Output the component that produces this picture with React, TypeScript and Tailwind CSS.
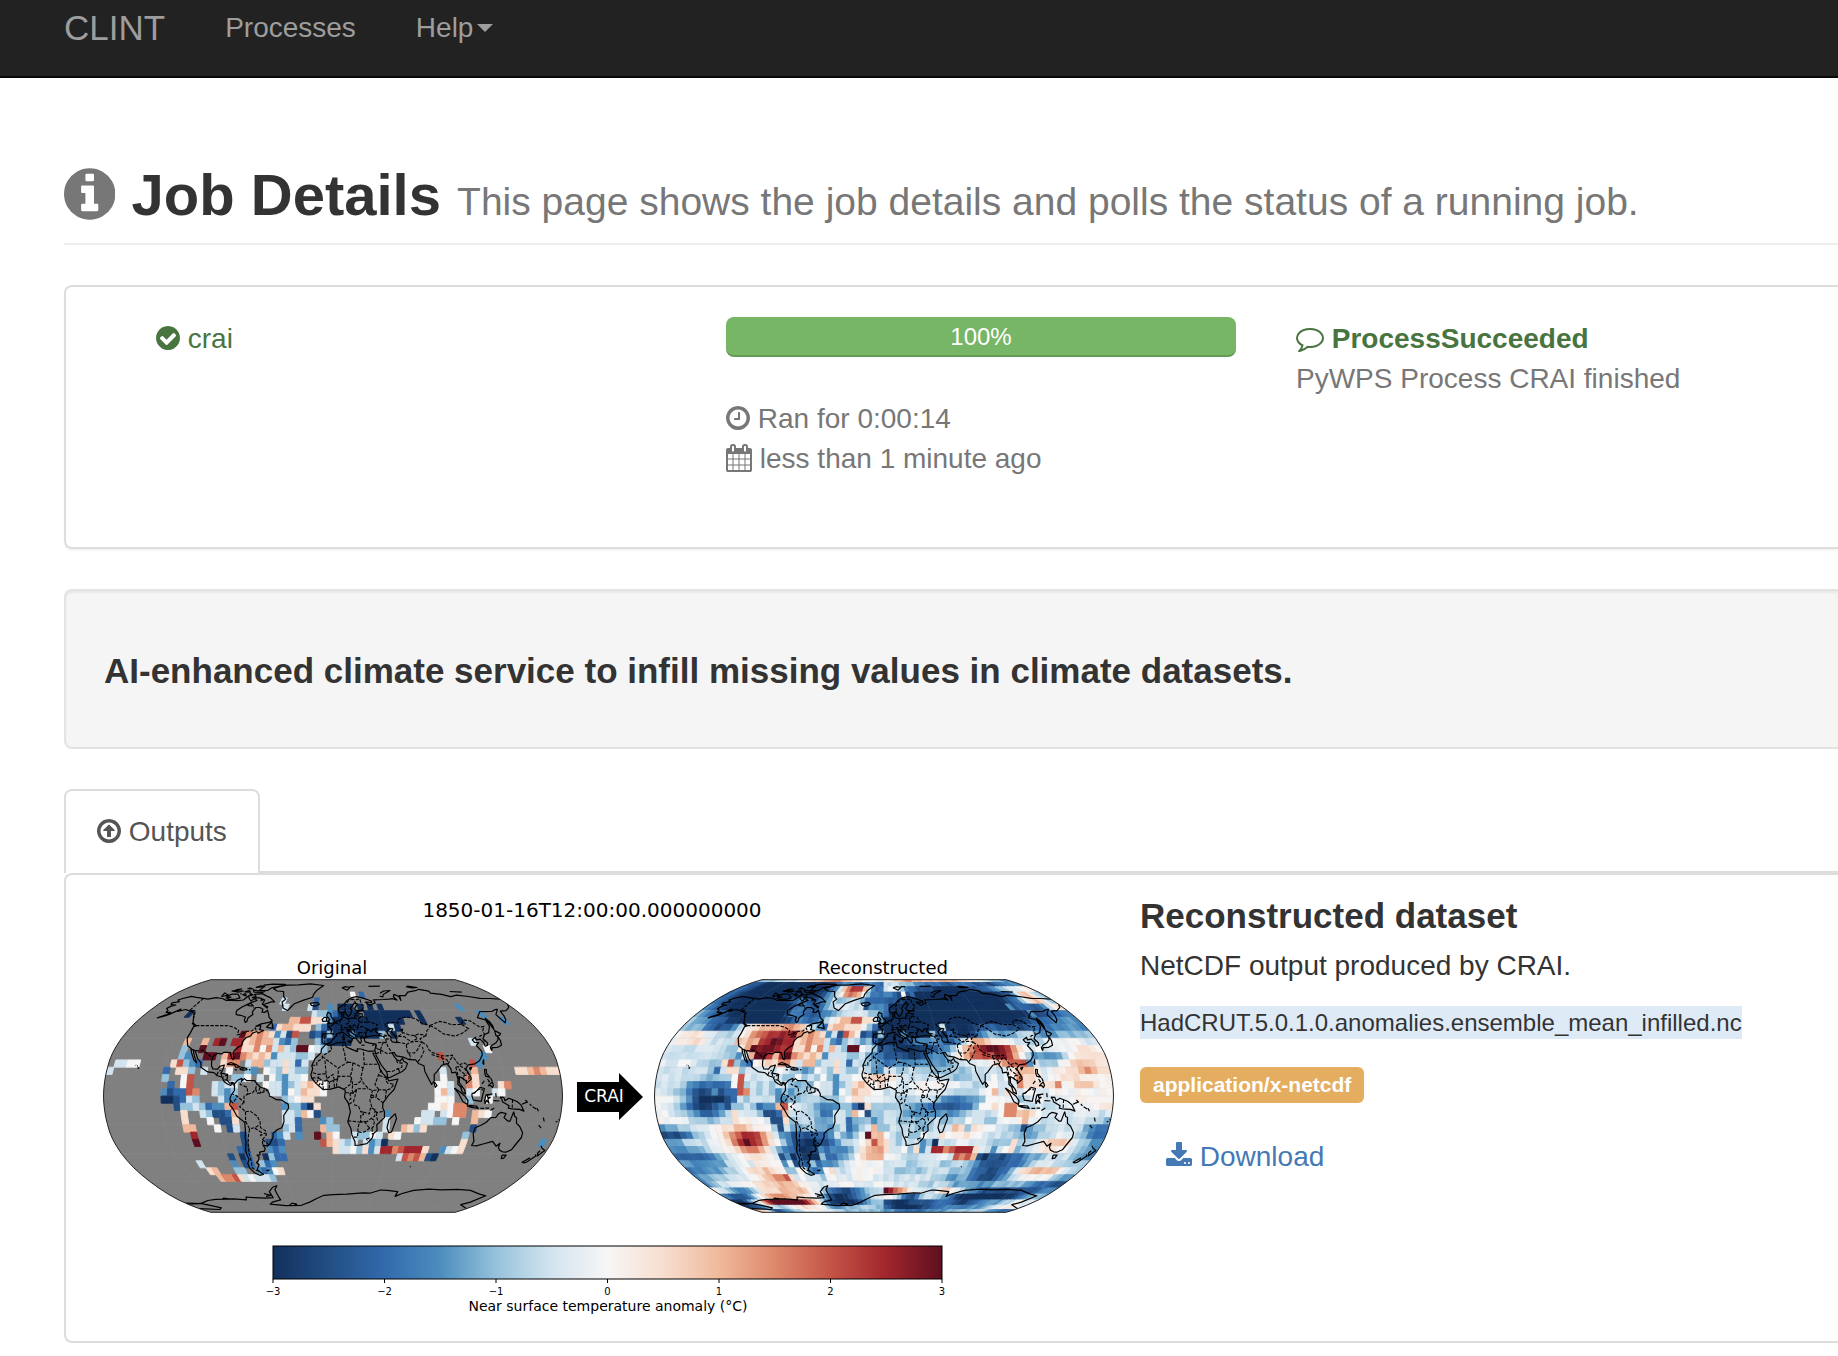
import React from "react";

/* ---------- Icons ---------- */

const DISC =
  "q0 209-103 385.5t-279.5 279.5-385.5 103-385.5-103-279.5-279.5-103-385.5 103-385.5 279.5-279.5 385.5-103 385.5 103 279.5 279.5 103 385.5z";

const ICONS = {
  info: {
    box: "128 0 1536 1792",
    d: "M1152 1376v-160q0-14-9-23t-23-9h-96v-512q0-14-9-23t-23-9h-320q-14 0-23 9t-9 23v160q0 14 9 23t23 9h96v320h-96q-14 0-23 9t-9 23v160q0 14 9 23t23 9h448q14 0 23-9t9-23zm-128-896v-160q0-14-9-23t-23-9h-192q-14 0-23 9t-9 23v160q0 14 9 23t23 9h192q14 0 23-9t9-23zm640 416" + DISC,
  },
  check: {
    box: "128 0 1536 1792",
    d: "M1412 734q0-28-18-46l-91-90q-19-19-45-19t-45 19l-408 407-226-226q-19-19-45-19t-45 19l-91 90q-18 18-18 46 0 27 18 45l362 362q19 19 45 19 27 0 46-19l543-543q18-18 18-45zm252 162" + DISC,
  },
  clock: {
    box: "128 0 1536 1792",
    d: "M1024 544v448q0 14-9 23t-23 9h-320q-14 0-23-9t-9-23v-64q0-14 9-23t23-9h224v-352q0-14 9-23t23-9h64q14 0 23 9t9 23zm416 352q0-148-73-273t-198-198-273-73-273 73-198 198-73 273 73 273 198 198 273 73 273-73 198-198 73-273zm224 0" + DISC,
  },
  up: {
    box: "128 0 1536 1792",
    d: "M1270 866q-9 30-38 30h-208v352q0 14-9 23t-23 9h-192q-14 0-23-9t-9-23v-352h-208q-30 0-38-30-6-20 8-38l342-340q12-10 24-10t24 10l340 340q15 16 10 38zM1440 896q0-148-73-273t-198-198-273-73-273 73-198 198-73 273 73 273 198 198 273 73 273-73 198-198 73-273zm224 0" + DISC,
  },
  calendar: {
    box: "64 0 1664 1792",
    d: "M192 1664h288v-288h-288v288zm352 0h320v-288h-320v288zm-352-352h288v-320h-288v320zm352 0h320v-320h-320v320zm-352-384h288v-288h-288v288zm736 736h320v-288h-320v288zm-384-736h320v-288h-320v288zm768 736h288v-288h-288v288zm-384-352h320v-320h-320v320zm-352-864v-288q0-13-9.5-22.5t-22.5-9.5h-64q-13 0-22.5 9.5t-9.5 22.5v288q0 13 9.5 22.5t22.5 9.5h64q13 0 22.5-9.5t9.5-22.5zm736 864h288v-320h-288v320zm-384-384h320v-288h-320v288zm384 0h288v-288h-288v288zm32-480v-288q0-13-9.5-22.5t-22.5-9.5h-64q-13 0-22.5 9.5t-9.5 22.5v288q0 13 9.5 22.5t22.5 9.5h64q13 0 22.5-9.5t9.5-22.5zm384-64v1280q0 52-38 90t-90 38h-1408q-52 0-90-38t-38-90v-1280q0-52 38-90t90-38h128v-96q0-66 47-113t113-47h64q66 0 113 47t47 113v96h384v-96q0-66 47-113t113-47h64q66 0 113 47t47 113v96h128q52 0 90 38t38 90z",
  },
  comment: {
    box: "0 0 1792 1792",
    d: "M896 384q-204 0-381.5 69.5t-282 187.5-104.5 255q0 112 71.5 213.5t201.5 175.5l87 50-27 96q-24 91-70 172 152-63 275-171l43-38 57 6q69 8 130 8 204 0 381.5-69.5t282-187.5 104.5-255-104.5-255-282-187.5-381.5-69.5zm896 512q0 174-120 321.5t-326 233-450 85.5q-70 0-145-8-198 175-460 242-49 14-114 22h-5q-15 0-27-10.5t-16-27.5v-1q-3-4-.5-12t2-10 4.5-9.5l6-9 7-8.5 8-9q7-8 31-34.5t34.5-38 31-39.5 32.5-51 27-59 26-76q-157-89-247.5-220t-90.5-281q0-174 120-321.5t326-233 450-85.5 450 85.5 326 233 120 321.5z",
  },
  download: {
    box: "64 0 1664 1792",
    d: "M1344 1344q0-26-19-45t-45-19-45 19-19 45 19 45 45 19 45-19 19-45zm256 0q0-26-19-45t-45-19-45 19-19 45 19 45 45 19 45-19 19-45zm128-224v320q0 40-28 68t-68 28h-1472q-40 0-68-28t-28-68v-320q0-40 28-68t68-28h465l135 136q58 56 136 56t136-56l136-136h464q40 0 68 28t28 68zm-325-569q17 41-14 70l-448 448q-18 19-45 19t-45-19l-448-448q-31-29-14-70 17-39 59-39h256v-448q0-26 19-45t45-19h256q26 0 45 19t19 45v448h256q42 0 59 39z",
  },
};

function Icon({ name, className = "h-7 align-[-4px]" }: { name: keyof typeof ICONS; className?: string }) {
  const icon = ICONS[name];
  return (
    <svg viewBox={icon.box} fill="currentColor" fillRule="evenodd" aria-hidden="true" className={"inline-block w-auto " + className}>
      <path d={icon.d} />
    </svg>
  );
}

/* ---------- Robinson projection ---------- */

const RX = [1, 0.9986, 0.9954, 0.99, 0.9822, 0.973, 0.96, 0.9427, 0.9216, 0.8962, 0.8679, 0.835, 0.7986, 0.7597, 0.7186, 0.6732, 0.6213, 0.5722, 0.5322];
const RY = [0, 0.062, 0.124, 0.186, 0.248, 0.31, 0.372, 0.434, 0.4958, 0.5571, 0.6176, 0.6769, 0.7346, 0.7903, 0.8435, 0.8936, 0.9394, 0.9761, 1];

function project(lon: number, lat: number) {
  const a = Math.min(Math.abs(lat) / 5, 18);
  const i = Math.min(Math.floor(a), 17);
  const f = a - i;
  const kx = RX[i] + (RX[i + 1] - RX[i]) * f;
  const ky = RY[i] + (RY[i + 1] - RY[i]) * f;
  return [(lon / 180) * kx * 229.5, -Math.sign(lat) * ky * 116.3];
}

const point = (lon: number, lat: number) =>
  project(lon, lat).map((v) => v.toFixed(1)).join(" ");

const lines = (source: string) =>
  source
    .split(";")
    .filter((part) => part.trim())
    .map((part) => {
      const n = part.trim().split(/[\s,]+/).map(Number);
      let d = "";
      for (let i = 0; i + 1 < n.length; i += 2) d += (i ? "L" : "M") + point(n[i], n[i + 1]);
      return d;
    })
    .join("");

const OUTLINE = (() => {
  const p: string[] = [];
  for (let lat = 90; lat >= -90; lat -= 5) p.push(point(-180, lat));
  for (let lat = -90; lat <= 90; lat += 5) p.push(point(180, lat));
  return "M" + p.join("L") + "Z";
})();

const GRATICULE = (() => {
  let d = "";
  for (let lon = -135; lon < 180; lon += 45) {
    const p: string[] = [];
    for (let lat = -90; lat <= 90; lat += 5) p.push(point(lon, lat));
    d += "M" + p.join("L");
  }
  for (let lat = -60; lat <= 60; lat += 20) d += "M" + point(-180, lat) + "L" + point(180, lat);
  return d;
})();

const COAST = lines(`
-168,66 -164,66.5 -162,67 -166,68.3 -163,69.5 -157,71.3 -150,70.5 -141,69.7 -135,69 -128,70.2 -120,69.5 -114,68 -108,68 -101,67.8 -96,68.3 -94,71.8 -91,69.5 -87,67.5 -85,69.5 -81,68 -86,66 -92,62.5 -94.5,60 -94,58.7 -92.5,57 -88,56.5 -82.3,55.2 -82,53 -80,51.3 -79,52 -79.5,54.6 -76.6,57 -78.5,59 -77.5,62.4 -73.5,62.4 -69.5,61 -69,58.8 -66,58.7 -64.5,60.3 -61.5,57 -60,55 -56,52.5 -58.5,51.3 -65,50.2 -69,48.5 -65,49.2 -64.5,47.8 -64.7,46.2 -61,45.5 -65,43.6 -66.5,44.8 -70,43.7 -70.6,41.8 -74,40.6 -76,38 -76,35.2 -78.5,33.8 -81.2,31.5 -81.3,29.5 -80.2,27 -80.4,25.2 -81.8,26 -82.8,28 -84,30 -86,30.3 -89.5,30.2 -90.5,29.2 -94,29.6 -97.3,27.7 -97.7,24 -97.2,21 -95.7,18.7 -92,18.6 -90.5,20.5 -87,21.5 -87.8,18.3 -88.9,15.9 -83.5,15 -83.6,11 -81.2,8.8 -79.5,9.5 -77.4,8.6 -75.5,10.7 -74.8,11.1 -72,12.2 -71.5,10.8 -70,12.1 -68,10.6 -62,10.7 -60,8.5 -57,6 -52,4.6 -50,1.5 -50,0 -48,-0.7 -44.5,-2.6 -40,-2.9 -37,-4.8 -35.2,-5.6 -34.9,-8.3 -37,-11 -39,-13.5 -39,-17.8 -41,-22 -44.6,-23.2 -48.5,-26 -48.7,-28.5 -52,-33 -54.5,-34.8 -58,-34 -56.8,-36.5 -58,-38.3 -62.2,-39 -62.3,-40.8 -65,-41 -63.7,-42.6 -65.4,-45 -67.5,-46.2 -65.8,-47.8 -69,-51 -68.3,-52.4 -65.2,-54.7 -69,-55.4 -73,-53.5 -75.5,-50 -75.4,-46.8 -73,-44 -73.7,-39.5 -73.4,-37 -71.5,-32 -71.5,-29 -70.4,-23.5 -70.3,-18.3 -76,-14 -79,-8.5 -81.3,-6 -80.3,-3.4 -81,-2.3 -80,0.5 -77.4,3.8 -77.5,7 -79.6,8.9 -80.5,7.3 -83.5,8.5 -85.8,10 -87.6,13 -91.5,14 -94.5,16.2 -99.5,16.7 -105.5,20 -106,23 -109.4,26 -113,31.3 -114.8,31.7 -112.7,28 -109.5,23 -112,24.7 -114.2,28 -115.8,30.2 -117.2,33 -120.6,34.6 -122.5,37.5 -124.3,40.3 -124,44 -124.6,48.3 -122.8,49 -127.5,51 -130.5,54.5 -134,58 -139.5,59.6 -146,60.8 -151.5,59.3 -151,61.2 -154,59 -158,56.3 -164.5,54.6 -159,57 -157.5,58.7 -162,58.7 -162,60 -166,61.6 -164.5,63.2 -161,64.3 -166.5,64.6 -168,66;
-128,50.7 -125,50 -123.5,48.4 -128,50.7; -59.3,47.8 -56,51.6 -53,47 -59.3,47.8; -155.9,20 -155,19.5 -155.8,19; -158,21.6 -157.7,21.3;-156.7,21 -156,20.7;
-85,22 -82,23.2 -77,21.6 -74.3,20.2 -77.5,19.9 -79,21.6 -85,22; -74.4,18.5 -72.8,19.9 -69,19.2 -68.5,18.3 -71.5,17.9 -74.4,18.5; -78.3,18.3 -76.3,18; -67,18.3 -65.7,18.2; -61.8,10.7 -61,10.2;
-125,72 -123,71.2 -118,72.5 -125,74.3 -124,72;-117,70 -111,68.6 -105,69 -101.5,70 -108,73.2 -115,73.3 -118.5,71.5 -112,70.4 -117,70; -100,73.8 -97,71.7 -102,72.8 -100,73.8; -95,74 -90,72.5 -93,72 -95,74; -120,76 -110,75 -106,76 -117,76.5 -120,76; -100,76.5 -96,75 -103,75.3 -100,76.5; -96,77 -90,76.3 -80,75.7 -82,74.6 -92,75 -96,77; -104,79 -98,78 -105,78.3; -92,81 -96,79.4 -86,80 -92,81; -90,81.9 -80,83 -63,82.8 -65,81.4 -76,79 -78,76.5 -88,76.4 -87,80 -90,81.9;
-89,70.3 -80,70 -73,68.3 -73,65 -66,62 -66,63 -72,64.5 -65,66.8 -61.5,66.8 -68,70 -75,72 -81,73.7 -89,73 -85,71 -89,70.3; -86,65.8 -81,63.5 -84,63.5 -87,64 -86,65.8; -80,62.3 -79,62; -117,77 -111,78; -106,73.7 -104,73.2; -78,69 -75,68.3 -77,67.5;
-73,78.2 -66,76 -58,75.5 -54.5,71 -51,69 -53.5,66.7 -50,62 -44.8,60 -42.5,62.5 -40,65.3 -32,68 -22.3,70.5 -22,73 -19,77 -12,81.5 -30,83.5 -45,82.2 -60,81.8 -68,80.2 -73,78.2;
-24,65.6 -22,64 -18.5,63.4 -14,64.8 -16,66.4 -24,65.6;
-9.5,52 -6,52.2 -6,55 -8.3,55 -10,53.5 -9.5,52; -5.6,50 1,51 1.6,52.8 0,53.5 -2,55.8 -2,57.6 -5,58.6 -6,56.5 -4.6,54.7 -3,53.4 -5,51.8 -3,51.4 -5.6,50;
-5.6,36 -9,37 -9.3,39 -9,43 -1.8,43.4 -1.2,46 -4.6,48.4 -1.5,48.7 2,51 4.5,52.5 8.5,53.7 8.2,57 10.5,57.7 10,55 14,54 20,54.6 21.5,57.5 24,58.4 24,59.3 30,60 23,60 21.3,61.5 25.3,65 22,65.8 17.2,61.5 18.5,60 16.5,57 14.3,55.5 11.3,59 7,58 5.2,60 5.5,62 11,64.6 15,68 19.8,70 25.7,71 31,70.3 41,67.5 40.5,66.4 34,66.7 37.5,64 40,64.8 44,66 43.5,68.5 54,68.7 60.5,69 64.5,69.4 68.5,68.2 66.8,71 69,73 73,71.3 72.5,68 74.5,72 81,72 87,75 98,76.3 104,77.6 113,75.8 112,74 123,73 130,71 139,72.3 150,71.2 160,69.7 170,69.5 180,69; 180,65 177,62.5 170,60 163.5,59.5 162,56 160,53.2 156.7,51 155.7,57 163,61 160,60.7 155,59.3 143,59.2 135.3,54.7 141,53 140,48.5 135.5,44 131,42.7 127.5,39.7 129.5,37 129,35.3 126.5,34.5 126.5,37 125,39.5 121.5,39 121.8,40.8 118,39 119,37.2 122.3,37 119.3,35 122,31 121.5,28.5 118,24.5 113.8,22.3 108.3,21.6 105.8,19 109,13 109,11.5 105,8.8 105,10.5 102.5,12.2 100,13.4 99.5,9.3 103.4,4 104,1.4 101.4,2.8 100.3,6.4 98.3,8.2 98.6,12 97.5,16.6 94.3,16 94,18.8 91.5,22.5 87,21.3 82.3,16.6 80.2,15 79.8,10.3 77.6,8.1 76,11 73,17 72.7,21 69,22.3 66.6,25 61.5,25.2 57,27 51.5,27.8 50,30 48,30 50.2,26.6 51.5,25 54,24.1 56.3,26.3 56.8,24.2 59.8,22.5 57.8,19 55,17 45,12.8 43.3,12.7 42.7,16.5 39,21 35,28 35,29.5 32.5,29.8 35.5,24 37,21 37.3,18.8 39.5,15.5 43.2,12.2 44,10.5 51.2,11.8 48,4.5 43.5,0.5 39.3,-4.7 39,-8 40.6,-11 40.7,-15 35,-19.9 35.5,-24 32.7,-26 32,-29 28,-33 22,-34 18.3,-34.3 18,-31.5 15.3,-27 14.4,-22.5 11.8,-18 13.7,-11 12,-5 9,-1 9.7,3.8 8.5,4.6 4.5,6.3 -2,4.8 -7.6,4.4 -13.2,8.6 -16.8,12.5 -17.5,14.7 -16.2,19 -17,21 -14.5,26 -9.8,29.8 -9.5,32.5 -6,35.8 -2,35 3,36.8 10,37.3 11,34 15.5,32.3 20,30.8 20,32.7 23,32.6 29,31 34.2,31.3 36,36 30.6,36.7 27,37.5 26.5,40 29,41.1 35,42 41.5,41.5 37,45 39.3,47 35,46.3 33.5,44.5 30.7,46.5 28,43 29,41.3 26,40.7 23.5,40.3 24,38 22.8,36.5 19.5,40 19.5,42 13.7,45.5 12.3,45.3 14,42.5 18.5,40.2 16.6,39.8 16,38 15.8,40 12.4,41.7 8.8,44.4 3.1,43.2 3,41.8 -0.5,39 -2,36.8 -5.6,36;
12.5,38 15.5,38.2 15,36.7 12.5,38; 8.3,39 8.3,41 9.7,40.5 9.5,39 8.3,39; 9,43 9.5,41.5; 23.6,35.4 26.2,35.1; 32.5,35 34.4,35.5;
49,41.5 47.5,43 47,44.8 51,47 53,46.7 51,44.6 53,42 53.9,39 53.9,37 50,37.5 49,39 49.5,40.5 49,41.5; 58.5,45.5 61.5,46.5 60,44;
49.2,-12.2 50.4,-15.8 47.2,-24.9 45,-25.5 43.3,-22 44.4,-16.5 49.2,-12.2; 80,9.7 81.8,7.3 80.3,6 79.8,8 80,9.7;
95.3,5.5 98.7,3.5 103.4,0 106,-3.2 105.7,-5.8 102,-4 98.7,1.6 95.3,5.5; 105.2,-6.8 108.5,-6.7 112.7,-6.9 114.4,-8.5 108.3,-7.8 105.2,-6.8; 109,1.8 111,2 115.5,6 119,5.2 117.5,1 116.4,-3.7 110.2,-2.9 109,0 109,1.8; 119.5,-5.5 119,-3 120,0.8 124.8,1.4 121,0.4 121.4,-1 123.3,-1 121.5,-2 122.5,-5 120.5,-3 119.5,-5.5; 116,-8.6 119,-8.5;120,-8.4 122.8,-8.4; 124,-10 127,-8.4; 127.7,2 128,-0.8; 126,-3.2 130.7,-3.5;
120.3,16.2 120.8,18.5 122.2,18.4 121.6,15.8 124,13 120.7,13.8 120.3,16.2; 122,7 125.4,9.7 126.3,7.5 125.3,5.8 124,7.3 122,7; 122,11.8 123.3,10 122.5,9.5; 124.5,12.5 125.5,10.3;117.3,8.4 119.3,10.5; 120.2,23 121.5,25.2 120.9,22 120.2,23; 108.7,19.4 110.8,20 109.6,18.2 108.7,19.4;
130.3,31.4 131.7,33.5 136,33.6 140.3,35.2 141.5,38.5 141.3,41.3 139.8,39 136.8,37 132.7,35.4 130.2,33.5 130.3,31.4; 140,41.6 141.8,45.4 145.3,43.3 143.2,42 140,41.6; 142,46 142.2,54.3 143.3,52 143.3,49.2 142,46;
131,-0.8 134,-1 135,-3.3 138,-1.6 144.5,-3.8 147.8,-6.2 150.5,-10.5 147,-9.3 143,-9.1 141,-9 138,-8.4 138.5,-6.8 133,-4 132.8,-2.8 131,-0.8; 148.5,-5.7 152.2,-4.2; 151,-2.7 153,-4.5; 154.7,-5.5 156,-6.8; 157,-7.5 160,-9; 160.5,-8.5 162,-10.5; 164.2,-20.2 167,-22.3; 166.7,-15 168,-17.7; 177.3,-18 178.5,-17.5; 179,-16.6 180,-16.2;
142.5,-10.8 143.8,-14.3 145.4,-15 146.3,-19 149.3,-21 153,-25.5 153.4,-28.8 151,-34 150,-37.3 146.3,-39 143.5,-38.7 140,-37.5 138,-35.6 137.8,-32.8 135.5,-34.8 131.2,-31.5 124,-33.3 119,-34.5 115,-34.3 115.7,-31.5 113.3,-26 114,-22 119,-20 122.3,-18 125,-15 129,-14.9 130.8,-12.3 132.7,-11.4 136.7,-12.2 135.5,-15 139.3,-17.5 140.8,-17.4 142.5,-10.8; 144.7,-41 148.2,-41 147.9,-43.2 146,-43.5 144.7,-41;
172.7,-34.5 174.8,-36.2 178.4,-37.7 175.3,-41.6 173.8,-39.4 174.7,-38; 172.7,-40.6 174.2,-41.7 170.5,-45.9 168.5,-46.6 166.5,-46 170.5,-43;
11,79 16,80 21,79.3 17,76.8 11,79; 21,80 27,80.2; 45,80.5 60,80.8; 52,71.5 55,70.8 57,73 68,76.5 60,76 54,74; 95,80.8 105,79.3 98,78.8 92,80; 137,75.5 150,75; 178.8,71 180,71.3;
-61,-51.8 -58,-51.7;-61,-52.1 -59,-52.1; 69,-49 70,-49.5; -75.5,20 -74,20.4;
-180,-78 -163,-78.5 -155,-77 -147,-75.5 -136,-74.5 -114,-74 -101,-75 -98,-72.5 -90,-73 -77,-73.5 -68,-73 -68,-68 -62,-64.5 -57,-63.3 -61,-66.5 -61,-71 -61,-75 -73,-77 -78,-79 -60,-80.5 -40,-80 -28,-77 -18,-73.5 -10,-71 0,-70.5 15,-70 32,-69 40,-69.3 50,-66.7 57,-67 69,-68 69.5,-72 75,-69.5 85,-67 100,-66 114,-66.5 130,-66.2 145,-67 160,-70 170,-71.5 165,-77 160,-79.5 180,-84; -180,-84 -155,-85 -148,-83 -153,-81 -160,-79 -163,-78; -165,-78.5 -180,-79; -55,-80 -50,-78 -45,-79 -50,-80.3 -55,-80; -75,-69.5 -69,-71 -75,-72;-120,-74 -125,-73.5 -127,-74;
`);

const BORDERS = lines(`
-141,69.7 -141,60.3 -135,59.7 -130.5,55;
-123,49 -95,49 -89,48 -83,45.8 -82.5,42.5 -79,43 -75,45 -71,45.2 -69,47.3 -67,45;
-117,32.5 -111,31.3 -106.5,31.7 -102.5,29.5 -99.5,27.5 -97.2,25.9; -92,14.6 -91,17.3 -89.2,17.8; -89,15.8 -87.7,13; -83.2,15 -87.3,13; -83.7,11 -85.7,11.2; -77.3,8.6 -77.8,7.2;
-71.5,11.8 -73,8 -67.4,6 -67,1.2 -69.8,0 -69.9,-4.3 -75,-0.2 -79,1.4; -80.3,-3.4 -78.5,-4.8 -75,-0.2; -69.9,-4.3 -73.5,-7.5 -70.5,-9.5 -69.5,-11 -65.3,-10.5 -60,-14 -58,-18 -58,-22 -54.5,-24 -54,-27 -57.6,-30.2 -58.3,-34; -69,-11 -69.5,-17.5 -67,-22.7 -62.5,-22 -58.2,-19.8; -62.6,-22.3 -57.7,-25.3 -58.7,-27.3 -54.6,-25.6; -67,-23 -68.5,-27 -70,-33 -71.5,-40 -71.5,-45 -73,-50 -70,-52 -68.5,-52.5; -57.6,-30.2 -53.4,-33.7; -67,1.2 -63,2.3 -60.7,5.2 -60,8.3; -60.7,5.2 -59.8,2 -56.5,2 -52,4; -57.2,6 -58,4 -56.5,2; -54,5.8 -54.4,2.3; -69.5,-17.5 -70.4,-18.3; -72,19.7 -71.7,18;
-17,21.3 -13,21.3 -13,23.5 -8.7,26 -8.7,27.6 -1,32 -2,35; -8.7,27.3 4,19.3 12,23.5 10,25 9.5,30 8,34 8.5,37; 12,23.5 16,23 24,19.5 25,22 25,31.6; 25,22 37,22; 24,19.5 22,12.7 24,8.7 28,5 31,3.7 36,4.5 42,4 45,5 48,8 43,9 41.5,11 43,12.7; 36,4.5 34,1 34,-1 39.3,-4.7; 36,4.5 33,8 36,14.5 38.5,18; 36.5,14.3 42.5,12.5; 42,4 41,-1.5; 16,23 15,17 13.5,13.7 14.5,12.5 15.5,8 18.5,8 22.8,11; 13.5,13.7 4,13.6 3.5,11.7 1,11 -2.8,9.8 -5,11 -5.5,15.5 -12,15 -16.5,16.2; 3.7,12 4.2,16.8 4,19.3; -5.5,15.5 -6.5,25; 1,11 0,15 -5,12; 2.8,6.5 2.8,9 3.6,11.7; 1.2,6.2 0.5,11; -3,5.2 -2.8,10; -7.5,4.5 -8,8 -8,10.5 -5,10.5; -11.5,7 -10,9 -8.2,7.5; -13,9 -11,12.3 -8,10.4; -16.5,12.4 -13.7,12.6 -11.4,12.4 -12,15; 8.6,4.8 13.5,8 14.5,12.5; 9.8,2.2 13.3,2.2 16.2,2 18.5,5 27.4,5; 16.2,2 15,4 15.5,8; 13.3,2.2 14,-2 11.2,-4; 18.5,4.5 17,-1 16,-4 12.2,-5.8; 16.5,-6 20,-7 22,-11 24,-11 24,-13 22,-13 22,-17.8 25,-17.6; 24,-11 28.5,-12.5 29.5,-8.5 30.7,-8.2 29,-3 30,1 31,3.7; 30.7,-8.3 33,-9.5 34.5,-11.5 40.4,-10.6; 33,-9.5 33,-14 30.3,-15.5 27,-17.8 25,-17.6; 30.3,-15.5 33,-17 32.5,-21 31.3,-22.3 29.4,-22.2 26,-24.7 23,-25.3 20,-24.8 20,-28.5 16.5,-28.5; 20,-24.8 20,-22 21,-18.3 25,-17.8 27.5,-20.5 29.4,-22.2; 11.8,-17.2 14,-17.4 21,-18; 31.3,-22.3 32,-26.8; 34.5,-11.5 34.5,-14.5 35.5,-17; 27.2,-29.6 29.3,-29.3 28,-30.5 27.2,-29.6; 30,1 34,-1; 29.5,-1.4 31,-1 34,-1;
34.5,31.3 35,29.5; 35.5,33 36,36; 36,33 39,32 39,29.5 37,30 35,29.3; 39,32 42,37.2 36.5,36.8; 39,32 44.7,29.2 48,30; 42,37.2 45,37 45.6,34 48,30.5; 45,37 44.5,39.5 43,41.3 41.6,41.5; 44.5,39.5 48,39.7; 43,41.3 46.5,41.8 48.5,41.8; 40,43.5 46.5,41.8; 43,17 47,17 52,19 55,20 55.5,22.8 52,23 51,24.6; 52,19 53,16.7;
54,37.4 60,36.5 61,35.5 61,31 63,27.2 61.6,25.2; 61,35.5 65,37.3 71,38 74.8,37.3 71,34 69.5,32 66.5,29.8 61,29.8; 74.8,37.3 78,35.5 79,32 81,30.2 88,28 92,27.8 97,28.3 98,26 101,21.5 105,23 108,21.6; 68.2,23.8 70.5,25.7 74.5,31 74,34; 80.2,28.8 88,26.5 88.2,27.8; 89,22 88.5,26.2 92,25 92.3,22; 92.3,22 93.5,24 97,27.5; 98,20 100,20.3 101,17.6 105.5,14.5 102.5,13.5 103,11; 98,20 98.7,16 99.3,12; 101.5,21 105,19 107.5,15 107.5,12 104.5,10.5; 100.2,6.6 102,6.2; 110,1.8 115,4.8 117.7,4.2;
51,46.5 48,48 47,50 52,51.5 59,51 61,53.8 69,55.3 77,54 80,51 87,49 85,47 82.5,45.5 80,42 74,43 70,42 66,42.3 61,44 56,41.3 53,42; 87,49 92,50.5 98,52 102,51.3 107,49.7 116,49.8 120,53 126,52.5 131,47.8 135,48.4 131,45 131,42.7 126.5,41.8 124.4,40; 87,49 91,47 96,43 105,41.6 112,43.5 120,46.8 116,49.8; 80,42 74,39.7 74.8,37.3; 70,42 72,40 68,38.3 65,37.3; 56,41.3 61,41.2 66,37.4; 126.7,37.8 128.4,38.6; 141,-2.6 141,-9;
-7,41.9 -7,37.2; -1.8,43.3 3.1,42.4; 2.5,51 6,49.5 8,49 7,46 7.5,43.8; 7,46 13.7,46.5 13.7,45.6; 8,49 7.5,47.6 13,47.6 17,48 16.5,46.5 13.7,46.5; 7,53.3 6,50.7; 14.3,53.9 15,51 12.2,50.2 13.8,48.8 17,48.8 19,49.5 22.5,49 24,51 23.5,54 19.5,54.4; 23.5,54 26.6,55.6 28,56 27.5,59; 26.6,55.6 31,55 32,53 31,51.5 24,51.5; 31,51.5 34,51.7 40,49.5 38.3,47.2; 21,56.2 26.5,55.8; 24,57.9 27.5,57.5; 16.5,46.5 19,46 21,46.2 22.8,48 26.6,48.3 30,46.5 28.2,45.4; 22.8,48 17,48; 19,46 19,43 20,42 23,41.3 26.5,41.8; 23,44 28.5,43.8; 22.5,44.5 22.5,42.3 20.8,40.8; 13.7,45.5 16,45 19,45; 28,60.5 31.5,62.8 29,66 29,69.3 25,68.5 21,69; 12,59 12,63.5 15.5,67 20.5,69 24,66;
`);

/* ---------- Temperature grids: one symbol per cell, 0 = -3 °C … 6 = 0 °C … C = +3 °C ---------- */

const STOPS = [
  [18, 48, 92], [34, 78, 132], [50, 106, 172], [76, 141, 190], [150, 194, 219], [211, 228, 239], [247, 246, 246],
  [247, 222, 207], [240, 185, 155], [221, 136, 107], [196, 84, 71], [162, 38, 45], [94, 15, 31],
];

function tint(level: number) {
  const l = Math.max(0, Math.min(12, level));
  const i = Math.min(11, Math.floor(l));
  const c = STOPS[i].map((v, k) => Math.round(v + (STOPS[i + 1][k] - v) * (l - i)));
  return "rgb(" + c.join(",") + ")";
}

/* Each row is a 5° band from the north pole down: runs of "start column:levels". */
const OBSERVED = [
  "", "", "", "4:6.2", "-11:5 -4:2", "-10:5 -5:51 -1:3 1:000 5:0.0.0 25:3",
  "-28:0 -4:544320000.000000000 16:0 28:3", "-8:88AA77530000000000000 16:0 23:0 31:3",
  "-11:2788777 -3:420000000000050", "-16:C98987351 -7:A..1204000300004.0",
  "-25:8 -22:8 -20:BC -17:BB78988532 -7:4 -3:420000 23:5", "-25:4 -22:C -16:B7796958 -8:54CC654 25:6",
  "-25:43 -21:CC -18:8BC987873555445 17:A 24:3", "-35:5566 -26:7A432 -18:799.5884557525 22:A3",
  "-36:5 -27:2 -25:774.5 -17:6 -14:43 -11:654754 -5:4 17:5 22:8 29:7789877",
  "-27:4 -24:6A -16:446 -12:5.643556 17:6 21:97", "-26:2 -24:6A -19:5455 -11:6553457876 16:665 21:97 26:79",
  "-27:3122A9 -19:5434 -10:553658776 16:685 21:56 25:56", "-27:001254 -18:533 -8:45677 16:666 21:4 24:6",
  "-25:14454233 -17:8A -8:344207 15:667699", "-24:7 -21:541128 -8:554861 8:3 14:55.5699 22:876",
  "-24:7 -20:6.117 -8:552 -2:34 8:5 13:65544 19:6 22:8", "-24:88 -19:6.15 -8:452 -2:844 8:5 11:8747 22:1",
  "-23:B -15:1 -10:235.3 -3:C.86 3:54465.76 21:4", "-23:C -15:1 -11:112 -2:A87545.5340 21:7 34:3",
  "-16:21 -11:323 0:75564735BB9ABBB7 18:3567", "-18:1.02 -12:0422 11:5A9A810", "-24:5 -18:3.12.423",
  "-23:78 -18:44 -14:32367", "-22:899A7565554", "", "", "", "", "", "",
];

/* The infilled field, two columns (10°) per symbol; observed cells are kept on top. */
const INFILLED = [
  "444555677899877665678988888887765443", "210000000001332232554432221222111233",
  "21000000000149BA32563211000011234566", "21000000000248A732311000000000012784",
  "210000001312445422210000000000013784", "310000000311455432200000000000022147",
  "421000000321345554100000000000001123", "432100000131469964000000000000012233",
  "442125788985367752000011001211122333", "6765458ABBB9847831000112003434533444",
  "6775558ABCB8765531002331388665456665", "5555547BCBB78566411001237ACCA6456676",
  "5555543AB9887455421102348ABCA5434777", "6755455678854565532333345568A8446877",
  "555545755554445653545444455579567887", "555444655544455568755554455578567766",
  "554222354444456477656666545567756876", "553112354434555576556655456766566666",
  "664001455534546566545532345655556666", "653013653565424544443211246865556667",
  "654224653355424454543333455586555655", "665445666245434444544444556566555554",
  "345567776434434355554455666543455532", "113568BB8421134468545556765543456532",
  "345568CB8520024569654455655444578643", "333567996300132489645458865444577543",
  "222356776410033588654556751112345543", "333356676631135666554554542112355544",
  "233456886664455666544455442113688864", "344556789766665665555554342113566643",
  "355667788765566556655545434334443221", "643257788865211345C97555864311111123",
  "311478988753001345652155420000001244", "0148CCCCC961000244100111221012334565",
  "013545677653344544200001223323345675", "872134566655444444332222333444454322",
];

type Grid = (number | null)[][];

const observed: Grid = OBSERVED.map((row) => {
  const cells: (number | null)[] = Array(72).fill(null);
  row.split(" ").filter(Boolean).forEach((run) => {
    const [start, levels] = run.split(":");
    [...levels].forEach((ch, i) => {
      const col = Number(start) + 36 + i;
      if (ch !== "." && col < 72) cells[col] = parseInt(ch, 16);
    });
  });
  return cells;
});

const infilled: Grid = INFILLED.map((row, r) =>
  Array.from({ length: 72 }, (_, c) => {
    const seen = observed[r][c];
    if (seen !== null) return seen;
    const at = (k: number) => parseInt(row[Math.max(0, Math.min(35, k))], 16);
    const own = at(c >> 1);
    const side = c === 35 || c === 36 ? own : at((c >> 1) + (c % 2 ? 1 : -1));
    const ripple = own < 1 || own > 11 ? 0 : (((r * 37 + c * 53 + ((r * c) % 7) * 11) % 10) - 4.5) / 12;
    return own * 0.72 + side * 0.28 + ripple;
  })
);

function cellPath(r: number, c: number) {
  const north = 90 - r * 5;
  const west = -180 + c * 5;
  return (
    "M" + point(west, north) + "L" + point(west + 5, north) + "L" + point(west + 5, north - 5) + "L" + point(west, north - 5) + "Z"
  );
}

function WorldMap({ id, grid, x, background }: { id: string; grid: Grid; x: number; background: string }) {
  return (
    <g transform={"translate(" + x + " 1095)"}>
      <clipPath id={id}>
        <path d={OUTLINE} />
      </clipPath>
      <path d={OUTLINE} fill={background} />
      <g clipPath={"url(#" + id + ")"}>
        {grid.map((row, r) =>
          row.map((level, c) =>
            level === null ? null : (
              <path key={r + "-" + c} d={cellPath(r, c)} fill={tint(level)} stroke={tint(level)} strokeWidth="0.9" />
            )
          )
        )}
        <path d={GRATICULE} fill="none" stroke="#b0b0b0" strokeOpacity="0.12" strokeWidth="1" />
        <path d={COAST} fill="none" stroke="#000" strokeWidth="1.2" strokeLinejoin="round" />
        <path d={BORDERS} fill="none" stroke="#000" strokeWidth="1.1" strokeDasharray="3.4 1.4" />
      </g>
      <path d={OUTLINE} fill="none" stroke="#222" strokeWidth="1" />
    </g>
  );
}

function Figure() {
  const left = 273;
  const right = 942;
  return (
    <svg
      viewBox="96 890 1024 434"
      role="img"
      aria-label="Original and reconstructed near surface temperature anomaly"
      fontFamily='"DejaVu Sans", sans-serif'
      textAnchor="middle"
      className="block w-full"
    >
      <defs>
        <linearGradient id="scale">
          {STOPS.map((_, i) => (
            <stop key={i} offset={i / 12} stopColor={tint(i)} />
          ))}
        </linearGradient>
      </defs>
      <text x="592" y="916" fontSize="20">1850-01-16T12:00:00.000000000</text>
      <text x="332" y="973" fontSize="18">Original</text>
      <text x="883" y="973" fontSize="18">Reconstructed</text>
      <WorldMap id="original" grid={observed} x={333} background="#808080" />
      <WorldMap id="reconstructed" grid={infilled} x={884} background="#d3e4ef" />
      <path d="M577 1081H619V1072L643 1096L619 1119V1111H577Z" />
      <text x="604" y="1101" fontSize="17" fill="#fff">CRAI</text>
      <rect x={left} y="1245" width={right - left} height="33" fill="url(#scale)" stroke="#000" strokeWidth="1" />
      {["−3", "−2", "−1", "0", "1", "2", "3"].map((label, i) => {
        const x = left + ((right - left) * i) / 6;
        return (
          <g key={label}>
            <path d={"M" + x + " 1278v4"} stroke="#000" />
            <text x={x} y="1294" fontSize="10">{label}</text>
          </g>
        );
      })}
      <text x="608" y="1310" fontSize="14">Near surface temperature anomaly (°C)</text>
    </svg>
  );
}

/* ---------- Page ---------- */

export default function App() {
  return (
    <div className="overflow-x-hidden bg-white pb-4 font-['Helvetica_Neue','Liberation_Sans',Arial,sans-serif] text-[28px] leading-10 text-[#333]">
      <nav className="flex h-[78px] items-start gap-[60px] border-b-2 border-[#080808] bg-[#222] pt-2 pl-16 text-[#9d9d9d]">
        <a href="#" className="text-[35px]">CLINT</a>
        <a href="#processes">Processes</a>
        <button type="button" className="flex items-center gap-1">
          Help
          <span className="border-x-8 border-t-8 border-x-transparent border-t-[#9d9d9d]" />
        </button>
      </nav>

      <main className="pl-16">
        <header className="mb-10 border-b-2 border-[#eee] pt-[84px] pb-2">
          <h1 className="text-[58px] leading-[66px] font-bold whitespace-nowrap">
            <Icon name="info" className="h-[60px] align-[-9px] text-[#777]" /> Job Details{" "}
            <small className="text-[39px] font-normal text-[#777]">
              This page shows the job details and polls the status of a running job.
            </small>
          </h1>
        </header>

        <section className="mb-10 grid grid-cols-3 gap-[60px] rounded-l-lg border-2 border-r-0 border-[#ddd] py-[30px] pr-8 pl-[90px] shadow-[0_2px_2px_rgba(0,0,0,0.05)]">
          <div className="pt-0.5 text-[#48743f]">
            <Icon name="check" /> crai
          </div>
          <div className="text-[#777]">
            <div
              role="progressbar"
              aria-label="Job progress"
              aria-valuenow={100}
              className="mb-[42px] h-10 rounded-lg bg-[#77b667] text-center text-2xl leading-10 text-white shadow-[inset_0_-2px_0_rgba(0,0,0,0.15)]"
            >
              100%
            </div>
            <p>
              <Icon name="clock" /> Ran for 0:00:14
            </p>
            <p className="mb-[38px]">
              <Icon name="calendar" /> less than 1 minute ago
            </p>
          </div>
          <div className="pt-0.5">
            <p className="font-bold text-[#48743f]">
              <Icon name="comment" /> ProcessSucceeded
            </p>
            <p className="text-[#777]">PyWPS Process CRAI finished</p>
          </div>
        </section>

        <section className="mb-10 rounded-l-lg border-2 border-r-0 border-[#e3e3e3] bg-[#f5f5f5] pt-[60px] pb-14 pl-[38px] shadow-[inset_0_2px_2px_rgba(0,0,0,0.05)]">
          <h2 className="text-[35px] font-bold">AI-enhanced climate service to infill missing values in climate datasets.</h2>
        </section>

        <div role="tablist" className="flex border-b-2 border-[#ddd]">
          <button
            type="button"
            role="tab"
            aria-selected="true"
            className="-mb-0.5 rounded-t-lg border-2 border-b-0 border-[#ddd] bg-white px-[31px] pt-[21px] pb-[21px] text-[#555]"
          >
            <Icon name="up" /> Outputs
          </button>
        </div>

        <section className="grid grid-cols-[1024fr_698fr] gap-5 rounded-l-lg border-2 border-r-0 border-[#ddd] pt-4 pb-4 pl-[30px]">
          <Figure />
          <div>
            <h3 className="mt-[3px] text-[35px] leading-[44px] font-bold">Reconstructed dataset</h3>
            <p className="mt-2">NetCDF output produced by CRAI.</p>
            <p className="mt-5 flex">
              <span className="bg-[#deebf7] text-2xl leading-[33px]">
                HadCRUT.5.0.1.0.anomalies.ensemble_mean_infilled.nc
              </span>
            </p>
            <span className="mt-7 block w-fit rounded-md bg-[#e5ad60] px-[13px] text-[21px] leading-9 font-bold text-white">
              application/x-netcdf
            </span>
            <a href="#download" className="mt-[34px] ml-[26px] inline-block text-[#4479b4]">
              <Icon name="download" /> Download
            </a>
          </div>
        </section>
      </main>
    </div>
  );
}
